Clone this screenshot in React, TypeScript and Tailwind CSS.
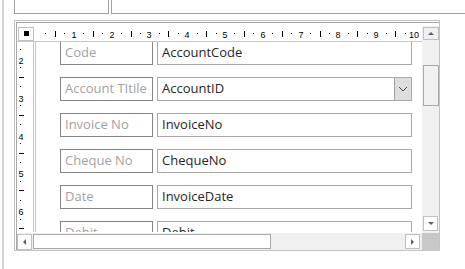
const CM = 37.8;

const fields = [
  { label: 'Code', value: 'AccountCode' },
  { label: 'Account TItile', value: 'AccountID', combo: true },
  { label: 'Invoice No', value: 'InvoiceNo' },
  { label: 'Cheque No', value: 'ChequeNo' },
  { label: 'Date', value: 'InvoiceDate' },
  { label: 'Debit', value: 'Debit' },
];

function TopRuler() {
  const marks = [];
  for (let k = 1; (k * CM) / 4 < 386; k++) {
    const x = Math.round((k * CM) / 4);
    const q = k % 4;
    if (q === 0)
      marks.push(
        <text key={k} x={x} y={11.5} textAnchor="middle" fontSize={9} fill="#000">
          {k / 4}
        </text>
      );
    else if (q === 2) marks.push(<rect key={k} x={x} y={5} width={1} height={6} fill="#000" />);
    else marks.push(<rect key={k} x={x} y={7} width={1} height={1} fill="#000" />);
  }
  return (
    <svg width={386} height={16} style={{ fontFamily: '"Liberation Sans", sans-serif' }}>
      {marks}
    </svg>
  );
}

function SideRuler() {
  const origin = -59.6;
  const marks = [];
  for (let k = 0; k < 40; k++) {
    const y = Math.round(origin + (k * CM) / 4);
    if (y < -8 || y > 198) continue;
    const q = k % 4;
    if (q === 0)
      marks.push(
        <text key={k} x={4} y={y + 5.5} textAnchor="middle" fontSize={9} fill="#000">
          {k / 4}
        </text>
      );
    else if (q === 2) marks.push(<rect key={k} x={2} y={y} width={5} height={1} fill="#000" />);
    else marks.push(<rect key={k} x={3} y={y} width={1} height={1} fill="#000" />);
  }
  return (
    <svg width={16} height={190} style={{ fontFamily: '"Liberation Sans", sans-serif' }}>
      {marks}
    </svg>
  );
}

function Arrow({ dir }: { dir: 'up' | 'down' | 'left' | 'right' }) {
  const pts = {
    up: '1,5 4,2 7,5',
    down: '1,2 4,5 7,2',
    left: '5,1 2,4 5,7',
    right: '2,1 5,4 2,7',
  }[dir];
  return (
    <svg width={8} height={8}>
      <polygon points={pts} fill="#606060" />
    </svg>
  );
}

export default function App() {
  return (
    <div className="flex h-[269px] w-[465px] overflow-hidden bg-white text-[13px]" style={{ fontFamily: '"Open Sans", sans-serif' }}>
      <div className="ml-[2px] w-[2px] bg-[#d4d4d4]" />
      <div className="flex flex-1 flex-col">
        <div className="flex h-[14px]">
          <div className="ml-[10px] w-[95px] border-x border-b border-[#a0a0a0]" />
          <div className="ml-[2px] flex-1 border-b border-l border-[#a0a0a0]" />
        </div>

        <div className="ml-[10px] mt-[6px] h-[231px] w-[426px] border border-[#c4c4c4] pl-px pt-px">
          <div className="grid h-full grid-cols-[405px_17px] grid-rows-[210px_17px] border-l border-t border-[#a8a8a8]">
            <div className="flex flex-col pt-[3px]">
              <div className="flex h-[16px] items-center border-b border-[#c8c8c8]">
                <div className="ml-px flex h-[14px] w-[16px] items-center justify-center border border-[#c0c0c0]">
                  <div className="h-[5px] w-[5px] bg-black" />
                </div>
                <div className="ml-[2px]">
                  <TopRuler />
                </div>
              </div>
              <div className="flex h-[190px]">
                <div className="w-[16px]">
                  <SideRuler />
                </div>
                <div className="w-[3px] border-x border-[#c8c8c8]" />
                <div className="flex-1 overflow-hidden">
                  <div className="-mt-px flex flex-col gap-[12px] pl-[24px]">
                    {fields.map((f) => (
                      <div key={f.label} className="flex h-[24px] gap-[4px]">
                        <div className="flex w-[93px] items-center whitespace-nowrap border border-[#868686] pl-[4px] text-[#a2a2a2]">
                          {f.label}
                        </div>
                        <div className="flex w-[255px] items-center border border-[#aaaaaa] text-[#262626]">
                          <span className="flex-1 pl-[4px]">{f.value}</span>
                          {f.combo ? (
                            <div className="flex h-full w-[17px] items-center justify-center border-l border-[#a0a0a0] bg-[#dedede]">
                              <svg width={10} height={6}>
                                <polyline points="1,1 5,5 9,1" fill="none" stroke="#444" strokeWidth={1} />
                              </svg>
                            </div>
                          ) : null}
                        </div>
                      </div>
                    ))}
                  </div>
                </div>
              </div>
            </div>

            <div className="flex flex-col pt-[3px]">
              <div className="flex flex-1 flex-col bg-[#f0f0f0] pt-px">
                <div className="ml-px flex h-[13px] w-[16px] items-center justify-center border border-[#c0c0c0] bg-[#f0f0f0]">
                  <Arrow dir="up" />
                </div>
                <div className="ml-px mt-[25px] h-[41px] w-[16px] border border-[#a8a8a8] bg-[#f0f0f0]" />
                <div className="flex-1" />
                <div className="mb-[2px] ml-px flex h-[15px] w-[15px] items-center justify-center border border-[#c0c0c0] bg-white">
                  <Arrow dir="down" />
                </div>
              </div>
            </div>

            <div className="flex items-center bg-[#f0f0f0]">
              <div className="flex h-[16px] w-[15px] items-center justify-center border border-[#c0c0c0] bg-white">
                <Arrow dir="left" />
              </div>
              <div className="ml-px h-[15px] w-[238px] border border-[#a8a8a8] bg-white" />
              <div className="flex-1" />
              <div className="mr-[2px] flex h-[15px] w-[15px] items-center justify-center border border-[#c0c0c0] bg-white">
                <Arrow dir="right" />
              </div>
            </div>
            <div className="bg-[#c8c8c8]" />
          </div>
        </div>
      </div>
    </div>
  );
}
